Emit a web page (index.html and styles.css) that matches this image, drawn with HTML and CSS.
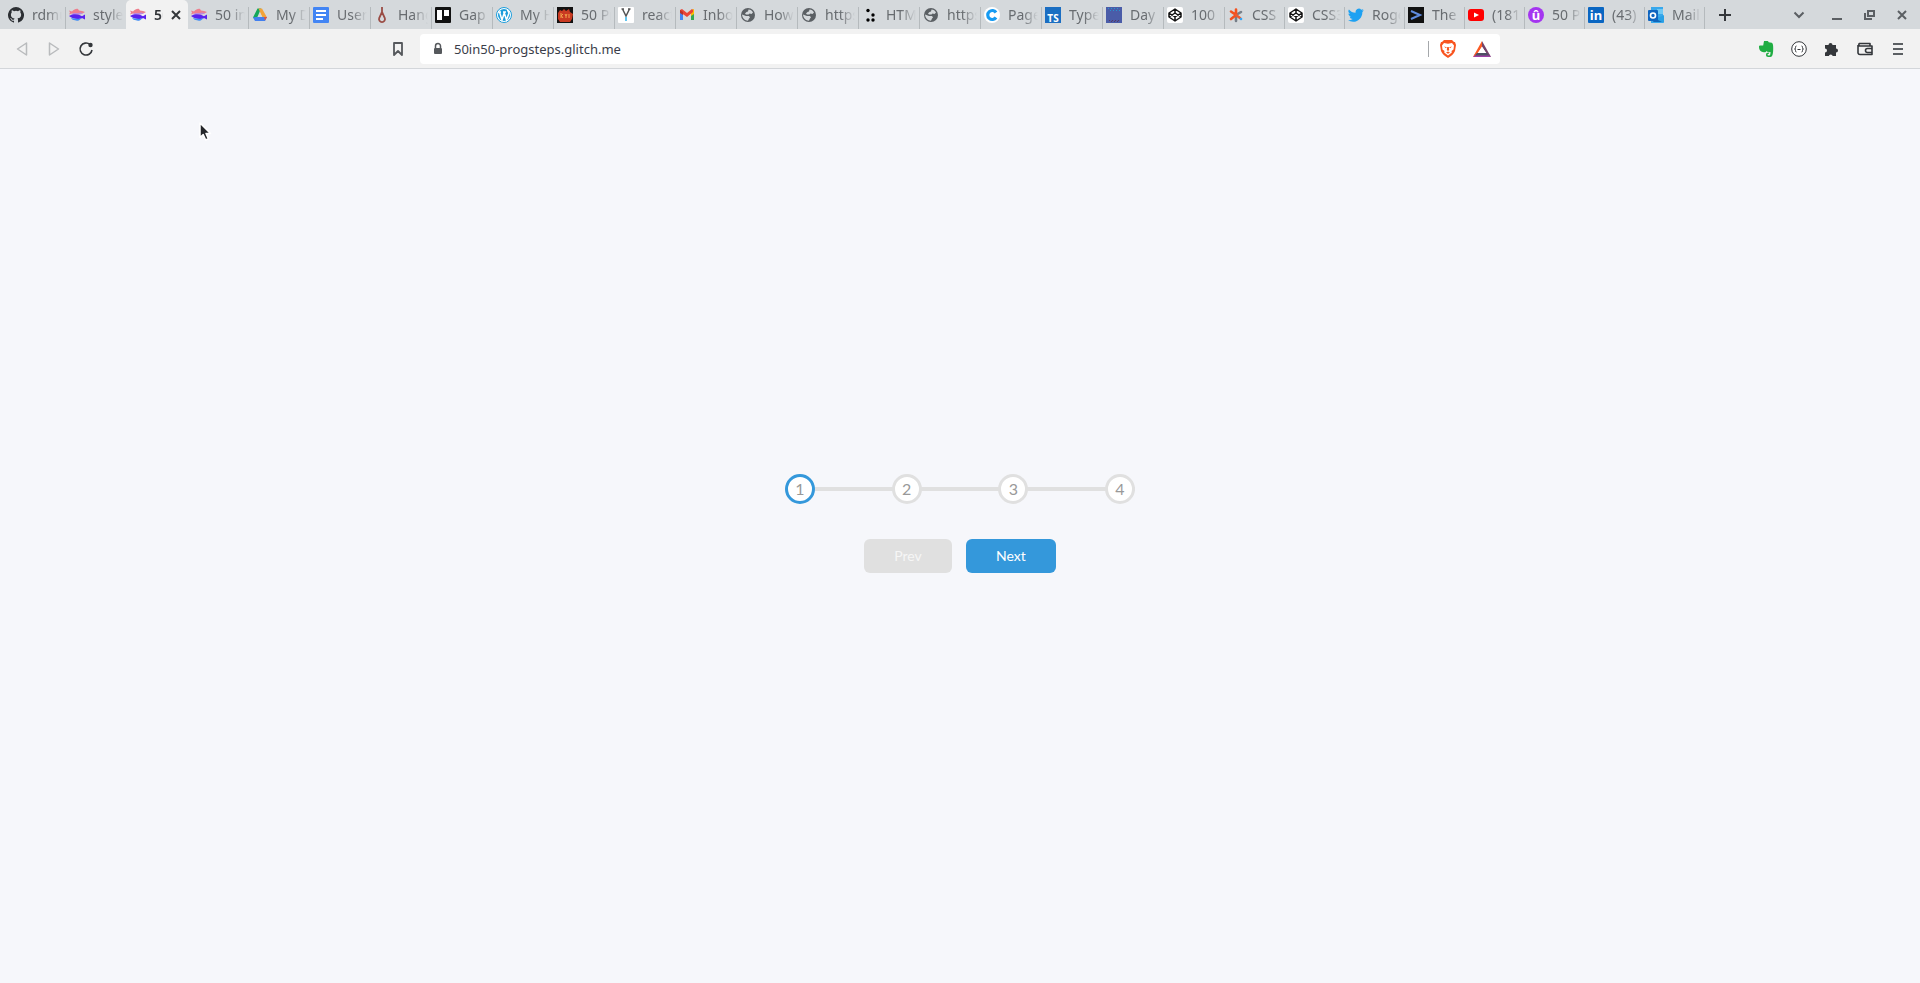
FILE: index.html
```
<!DOCTYPE html>
<html lang="en">
<head>
  <meta charset="UTF-8" />
  <title>Progress Steps</title>
  <meta name="viewport" content="width=device-width, initial-scale=1" />
  <link rel="stylesheet" href="styles.css">
</head>
<body>

  <!-- Shared icons -->
  <svg class="sprite" aria-hidden="true">
    <symbol id="fish" viewBox="0 0 16 16">
      <path fill="#ee7f8e" d="M0 3.500l3 1C5 2.500 7 1.500 9 2l1 1.500c2 0 4 .5 6 1.500-2 1.500-5 2.500-8 2.500-2 0-4-.5-5-1L0 7.500l1-2z"/>
      <path fill="#b98be0" d="M3 6.500c3-1 6 0 8-1l3 .8c-2 1.500-8 2-11 .2z"/>
      <path fill="#5a22ee" d="M0 9c2-1.500 4-1.800 6-1.800 3 0 5 .8 7 2L16 7.500v5l-3-1.500c-3 1.500-9 1.500-13-2z"/>
      <path fill="#3f8df5" d="M2 11c3 1 7 1.200 11 0l-2 1.500c-1 1.500-4 1.500-5 .8-2 0-3-1-4-2.300z"/>
    </symbol>
    <symbol id="globe" viewBox="0 0 16 16">
      <circle cx="8" cy="8" r="7" fill="#5b6064"/>
      <path fill="#d5d9dc" d="M8.500 2.500c2 0 3.500 1 4.500 3l-1.500 1.500-2-.5-1 1H6L5 6.500 6.500 5l1.500-.5zM2 7.500l4 1.500h3l1 1.500-1 1-1 2.300C5 13.500 2.500 11.500 2 7.500z"/>
    </symbol>
    <symbol id="codepen" viewBox="0 0 16 16">
      <rect width="16" height="16" rx="2" fill="#fff"/>
      <path fill="none" stroke="#111" stroke-width="1.500" stroke-linejoin="round" d="M8 2l6 4v4l-6 4-6-4V6zM8 2v4M8 10v4M2 6l6 4 6-4M2 10l6-4 6 4"/>
    </symbol>
  </svg>

  <header class="browser">
    <div class="tab-strip">
      <div class="tabs">
        <div class="tab"><button class="tab-button"><svg class="favicon" viewBox="0 0 16 16"><path fill="#2c2f33" d="M8 0a8 8 0 0 0-2.530 15.590c.4.070.55-.17.55-.38v-1.490c-2.230.49-2.700-.94-2.700-.94-.36-.93-.89-1.170-.89-1.170-.73-.5.060-.49.060-.49.8.060 1.230.83 1.230.83.71 1.220 1.870.87 2.330.66.070-.52.280-.87.510-1.070-1.780-.2-3.640-.89-3.640-3.950 0-.87.310-1.590.82-2.150-.08-.2-.36-1.020.080-2.120 0 0 .67-.21 2.200.82a7.600 7.600 0 0 1 4 0c1.530-1.040 2.200-.82 2.200-.82.44 1.100.16 1.920.080 2.120.51.56.82 1.270.82 2.150 0 3.070-1.870 3.750-3.650 3.950.29.250.54.73.54 1.480v2.190c0 .21.150.46.55.38A8 8 0 0 0 8 0z"/></svg><span>rdmu</span></button></div>
        <div class="tab"><button class="tab-button"><svg class="favicon"><use href="#fish"/></svg><span>style.</span></button></div>
        <div class="tab active"><button class="tab-button"><svg class="favicon"><use href="#fish"/></svg><span>50</span></button><button class="tab-close" aria-label="Close tab"><svg viewBox="0 0 10 10"><path d="M1 1l8 8M9 1L1 9"/></svg></button></div>
        <div class="tab"><button class="tab-button"><svg class="favicon"><use href="#fish"/></svg><span>50 in</span></button></div>
        <div class="tab"><button class="tab-button"><svg class="favicon" viewBox="0 0 16 16"><path fill="#12a85b" d="M5.500 1.500H9L4 13.500l-3-3z"/><path fill="#f2a33a" d="M6.500 1.500H10l5 9h-4.500z"/><path fill="#4280ef" d="M4 10h11l-2 4H3l-2-3.500z"/><path fill="#e8503a" d="M12 10h3l-2 3.500z"/><path fill="#d5d9dc" d="M8 6l2.300 4H5.700z"/></svg><span>My Dr</span></button></div>
        <div class="tab"><button class="tab-button"><svg class="favicon" viewBox="0 0 16 16"><rect width="16" height="16" rx="1" fill="#4285f4"/><path stroke="#fff" stroke-width="2" d="M3 4h10M3 8h10M3 12h7"/></svg><span>User</span></button></div>
        <div class="tab"><button class="tab-button"><svg class="favicon" viewBox="0 0 16 16"><path fill="none" stroke="#9a4c44" stroke-width="1.800" d="M8 0v5M8 5l-2.800 6a3 3 0 1 0 5.600 0zM6.500 7h3"/></svg><span>Hang</span></button></div>
        <div class="tab"><button class="tab-button"><svg class="favicon" viewBox="0 0 16 16"><rect width="16" height="16" rx="1" fill="#111"/><path fill="#fff" d="M2 3h5v10H2zM9 3h5v6H9z"/></svg><span>Gap</span></button></div>
        <div class="tab"><button class="tab-button"><svg class="favicon" viewBox="0 0 16 16"><circle cx="8" cy="8" r="7.500" fill="#fff" stroke="#1c9ddb"/><circle cx="8" cy="8" r="6" fill="#1c9ddb"/><path fill="none" stroke="#fff" stroke-width="1.500" d="M2 5h3M7 5h3M3.500 5L6 13l2.200-7M8 5l2.500 8L13 6l-1.500-3"/></svg><span>My Ho</span></button></div>
        <div class="tab"><button class="tab-button"><svg class="favicon" viewBox="0 0 16 16"><path fill="#111" d="M0 0h16v16H0z"/><path fill="#c93a22" d="M1 6l2-3 2 1 2-2 2 2 3-2 1 3 3 2-1 5-2 3H3l-2-3z"/><path fill="none" stroke="#f3a54d" d="M4 6v5M4 9l2-2M4.500 9L6 11M8 7l1 2 1-2M9 9v2M12 7v4"/></svg><span>50 Pr</span></button></div>
        <div class="tab"><button class="tab-button"><svg class="favicon" viewBox="0 0 16 16"><rect width="16" height="16" rx="1" fill="#fff"/><path fill="none" stroke="#555" stroke-width="1.500" d="M4.500 2L8 9l3.500-7M3.500 2h2.500M10 2h2.500"/><path stroke="#61c4ee" stroke-width="2" d="M8 10v4"/></svg><span>react</span></button></div>
        <div class="tab"><button class="tab-button"><svg class="favicon" viewBox="0 0 16 16"><path fill="#4285f4" d="M1 4h3v9H1z"/><path fill="#34a853" d="M12 4h3v9h-3z"/><path fill="#fbbc04" d="M12 3l3-1v5l-3 2z"/><path fill="#ea4335" d="M1 3l2-1 5 4 5-4 1 1v2l-6 5-7-5z"/><path fill="#b9312b" d="M1 3l3 2v3L1 6z"/></svg><span>Inbox</span></button></div>
        <div class="tab"><button class="tab-button"><svg class="favicon"><use href="#globe"/></svg><span>How</span></button></div>
        <div class="tab"><button class="tab-button"><svg class="favicon"><use href="#globe"/></svg><span>https</span></button></div>
        <div class="tab"><button class="tab-button"><svg class="favicon" viewBox="0 0 16 16"><circle cx="6" cy="3.500" r="1.700"/><circle cx="11" cy="8" r="1.700"/><circle cx="6" cy="13" r="1.700"/><circle cx="11" cy="13" r="1.700"/></svg><span>HTML</span></button></div>
        <div class="tab"><button class="tab-button"><svg class="favicon"><use href="#globe"/></svg><span>https</span></button></div>
        <div class="tab"><button class="tab-button"><svg class="favicon" viewBox="0 0 16 16"><circle cx="8" cy="8" r="8" fill="#fff"/><path fill="none" stroke="#169bf2" stroke-width="3.200" d="M12 5.500a4.500 4.500 0 1 0 0 5"/></svg><span>Page</span></button></div>
        <div class="tab"><button class="tab-button"><span class="favicon letters ts">TS</span><span>Types</span></button></div>
        <div class="tab"><button class="tab-button"><svg class="favicon" viewBox="0 0 16 16"><path fill="#4a5ca8" d="M0 0h16v16H0z"/><path stroke="#2695d0" stroke-dasharray="1 2" d="M2 1.500h12M4 3.500h10"/><path stroke="#583862" stroke-dasharray="1 2" d="M3 13.500h11M5 14.500h9"/></svg><span>Day 3</span></button></div>
        <div class="tab"><button class="tab-button"><svg class="favicon"><use href="#codepen"/></svg><span>100 D</span></button></div>
        <div class="tab"><button class="tab-button"><svg class="favicon" viewBox="0 0 16 16"><g fill="none" stroke-width="2.600" stroke-linecap="round"><path stroke="#777f88" d="M8 8v6M8 8l5-3"/><path stroke="#f4511e" d="M8 8L3 4.500M8 8l-5 4M8 8V2.500"/><path stroke="#ee5b30" d="M8 8l4 3"/><path stroke="#36a5f4" d="M13 12v0"/></g></svg><span>CSS</span></button></div>
        <div class="tab"><button class="tab-button"><svg class="favicon"><use href="#codepen"/></svg><span>CSS3</span></button></div>
        <div class="tab"><button class="tab-button"><svg class="favicon" viewBox="0 0 24 24"><path fill="#1da1f2" d="M23.600 4.900c-.9.400-1.800.7-2.800.8 1-.6 1.800-1.600 2.200-2.700-1 .6-2 1-3.100 1.200a4.900 4.900 0 0 0-8.400 4.500C7.400 8.500 3.800 6.600 1.400 3.600a4.900 4.900 0 0 0 1.500 6.600c-.8 0-1.600-.2-2.200-.6v.1c0 2.400 1.700 4.400 3.900 4.800a5 5 0 0 1-2.200.1 4.900 4.900 0 0 0 4.600 3.400A9.900 9.900 0 0 1 0 20a14 14 0 0 0 7.500 2.200c9.100 0 14.300-7.700 14-14.600.8-.7 1.600-1.600 2.100-2.700z"/></svg><span>Roge</span></button></div>
        <div class="tab"><button class="tab-button"><svg class="favicon" viewBox="0 0 16 16"><path fill="#111" d="M0 0h16v16H0z"/><path fill="none" stroke="#5f8be0" stroke-width="2" d="M3 4l9 4-9 4"/></svg><span>The</span></button></div>
        <div class="tab"><button class="tab-button"><svg class="favicon" viewBox="0 0 16 16"><rect y="2" width="16" height="12" rx="3" fill="#f00"/><path fill="#fff" d="M6 5.500v5L11 8z"/></svg><span>(181)</span></button></div>
        <div class="tab"><button class="tab-button"><span class="favicon letters udemy">û</span><span>50 Pr</span></button></div>
        <div class="tab"><button class="tab-button"><span class="favicon letters linkedin">in</span><span>(43)</span></button></div>
        <div class="tab"><button class="tab-button"><svg class="favicon" viewBox="0 0 16 16"><path fill="#38a8ec" d="M3 0h12v16H3z"/><path fill="#70c8f4" d="M9 2h6v5H9z"/><path fill="#1267b8" d="M8 9l8 6H5z"/><path fill="#2aa0e5" d="M16 8v8l-8-4z"/><rect y="3" width="10" height="11" rx="1" fill="#0f65c0"/><circle cx="5" cy="8.500" r="2.500" fill="none" stroke="#fff" stroke-width="1.600"/></svg><span>Mail -</span></button></div>
      </div>
      <button class="icon-button new-tab" aria-label="New tab"><svg viewBox="0 0 16 16"><path stroke-width="2" d="M8 2v12M2 8h12"/></svg></button>
      <div class="window-buttons">
        <button class="icon-button tab-search" aria-label="Search tabs"><svg viewBox="0 0 16 16"><path stroke-width="2" d="M3.500 5.500L8 10l4.500-4.500"/></svg></button>
        <button class="icon-button" aria-label="Minimize"><svg viewBox="0 0 16 16"><path stroke-width="2" d="M4 12h10"/></svg></button>
        <button class="icon-button" aria-label="Restore"><svg viewBox="0 0 16 16"><path stroke-width="2" d="M7 4h6v5H7zM4 6v6h7"/></svg></button>
        <button class="icon-button" aria-label="Close"><svg viewBox="0 0 16 16"><path stroke-width="2" d="M4 4l8 8M12 4l-8 8"/></svg></button>
      </div>
    </div>

    <div class="toolbar">
      <div class="toolbar-left">
        <button class="icon-button" aria-label="Back" disabled><svg viewBox="0 0 16 16"><path stroke-width="1.500" stroke-linejoin="round" d="M12.500 2v12L3.500 8z"/></svg></button>
        <button class="icon-button" aria-label="Forward" disabled><svg viewBox="0 0 16 16"><path stroke-width="1.500" stroke-linejoin="round" d="M3.500 2v12l9-6z"/></svg></button>
        <button class="icon-button" aria-label="Reload"><svg viewBox="0 0 16 16"><path stroke-width="1.600" d="M12 3.500A6 6 0 1 0 14 9"/><circle cx="12.500" cy="4" r="2.200" fill="#34373b" stroke="none"/></svg></button>
        <button class="icon-button bookmark" aria-label="Bookmark"><svg viewBox="0 0 16 16"><path stroke-width="1.800" stroke-linejoin="round" d="M4 2h8v12l-4-4-4 4z"/></svg></button>
      </div>
      <div class="address-bar">
        <svg class="lock" viewBox="0 0 16 16"><rect x="4" y="7" width="8" height="6" rx="1" fill="#55585c"/><path fill="none" stroke="#55585c" stroke-width="1.500" d="M5.500 7V5a2.500 2.500 0 0 1 5 0v2"/></svg>
        <input type="text" aria-label="Address" value="50in50-progsteps.glitch.me">
        <span class="divider"></span>
        <button class="shield" aria-label="Shields"><svg viewBox="0 0 18 18"><path fill="#f8541f" d="M5 0h8l2 2h1l1 3-1 6c-1 3-4 5-7 7-3-2-6-4-7-7L1 5l1-3h1z"/><path fill="#fff" d="M5 3l4 .8L13 3l2 2.500-.5 4-2 1.500.3 1.500L9 15.500l-3.800-3 .3-1.500-2-1.500-.5-4z"/><path fill="#f8541f" d="M5 6.500l2.800.8-.8 1zM13 6.500l-2.800.8.8 1zM8.200 7h1.600l.4 3L9 11l-1.200-1zM7 12.500l2-1 2 1-2 1.200z"/></svg></button>
        <button class="shield" aria-label="Rewards"><svg viewBox="0 0 18 18"><path fill="#9e3fa5" d="M0 17l2-3h14l2 3z"/><path fill="#fb5a23" d="M9 1v6l-5 7-4 3z"/><path fill="#75436a" d="M9 1l9 16-4-3-5-7z"/><path fill="#4d4f63" d="M4 13h10l2 2.500H2z"/><path fill="#fff" d="M9 6.500l4 6.500H5z"/></svg></button>
      </div>
      <div class="toolbar-right">
        <button class="icon-button" aria-label="Evernote"><svg viewBox="0 0 16 16"><path fill="#20ad43" stroke="none" d="M6 0h3c.9 0 1.400.5 1.700 1.200l3 .5c1 .3 1.500 1.800 1.500 5.300 0 4-.2 9-2.900 9h-2C8.700 16 8 15 8 13.700c0-1.400 1-2.200 2.800-2.200v1.400c-1 0-1.300.3-1.300.8s.4.800 1 .8h.8c1 0 1.200-1.600 1.200-3.500-1.500.3-3 .2-3.800-1-.6 1-1.500 1.300-2.900 1.200C3 11 1 9.500 1 5.500c0-.8.400-1.100 1-1.100h3.200z"/><path stroke="#f2f2f2" stroke-width=".8" d="M1.500 4L5.500.3"/></svg></button>
        <button class="icon-button" aria-label="JSON viewer"><svg viewBox="0 0 16 16"><circle cx="8" cy="8" r="7.300" fill="#fff"/><path d="M5.500 5c-1 0-1 .5-1 1.500S4.500 8 3.500 8c1 0 1 .5 1 1.500s0 1.500 1 1.500M10.500 5c1 0 1 .5 1 1.500s0 1.500 1 1.500c-1 0-1 .5-1 1.500s0 1.500-1 1.500M6.500 8.500h3"/></svg></button>
        <button class="icon-button" aria-label="Extensions"><svg viewBox="0 0 16 16"><path fill="#34373b" stroke="none" d="M1 4h3.500a2 2 0 1 1 4 0H12v3.500a2 2 0 1 1 0 4V15H8.700a2 2 0 0 0-3.900 0H1v-3.500a2 2 0 0 0 0-4z"/></svg></button>
        <button class="icon-button" aria-label="Wallet"><svg viewBox="0 0 16 16"><path stroke-width="1.600" stroke-linejoin="round" d="M13 5V2.500H2.500a1.500 1.500 0 0 0 0 2.500H15v8.500H3A2 2 0 0 1 1 12V4M15 7.500h-4.500a2 2 0 0 0 0 4H15"/></svg></button>
        <button class="icon-button menu" aria-label="Menu"><svg viewBox="0 0 16 16"><path stroke-width="2" d="M3 3h10M3 8h10M3 13h10"/></svg></button>
      </div>
    </div>
  </header>

  <main class="page">
    <div class="container">
      <div class="progress-container">
        <div class="circle active">1</div>
        <div class="circle">2</div>
        <div class="circle">3</div>
        <div class="circle">4</div>
      </div>
      <button class="btn" id="prev" disabled>Prev</button>
      <button class="btn" id="next">Next</button>
    </div>
  </main>

  <svg class="cursor" viewBox="0 0 14 20" aria-hidden="true"><path fill="#24262a" stroke="#fff" stroke-width="1.500" stroke-linejoin="round" d="M1 1v14.500l3.200-3 2.500 5.500 2.600-1.200L7 11.500h4.500z"/></svg>

</body>
</html>
```
FILE: styles.css
```
/* Reset and base */
* {
  box-sizing: border-box;
  margin: 0;
  padding: 0;
}
body {
  min-height: 100vh;
  display: flex;
  flex-direction: column;
  background: #f6f7fb;
  font-family: 'Noto Sans', sans-serif;
  overflow: hidden;
}
button {
  border: none;
  background: none;
  font-family: inherit;
  cursor: pointer;
}
.sprite {
  display: none;
}

/* Tab strip */
.tab-strip {
  display: flex;
  align-items: center;
  height: 29px;
  padding: 0 10px 0 5px;
  background: #d5d9dc;
}
.tabs {
  display: flex;
  align-items: flex-end;
  align-self: stretch;
}
.tab {
  display: flex;
  align-items: flex-start;
  width: 61px;
  height: 22px;
  padding-left: 3px;
  border-right: 1px solid #b5babd;
}
.tab:nth-child(n+21) {
  width: 60px;
}
.tab:nth-child(2) {
  border-right-color: transparent;
}
.tab.active {
  width: 62px;
  height: 29px;
  margin-left: -1px;
  padding: 7px 0 0 4px;
  border: none;
  border-radius: 5px 5px 0 0;
  background: #f2f2f2;
}
.tab-button {
  display: flex;
  align-items: center;
  flex: 1;
  min-width: 0;
  height: 16px;
  gap: 8px;
  color: #686c70;
  font-size: 14px;
  line-height: 22px;
  text-align: left;
}
.tab-button span:last-child {
  flex: 1;
  min-width: 0;
  margin-right: 3px;
  overflow: hidden;
  white-space: nowrap;
  mask-image: linear-gradient(to right, #000 50%, transparent);
}
.tab.active .tab-button {
  color: #2c2f33;
  font-weight: 600;
}
.tab.active .tab-button span:last-child {
  margin: 0;
  mask-image: linear-gradient(to right, #000 70%, transparent);
}
.favicon {
  flex: none;
  width: 16px;
  height: 16px;
}
.letters {
  color: #fff;
  font-weight: 700;
  line-height: 16px;
  text-align: center;
}
.ts {
  padding-top: 4px;
  background: #1b6ec2;
  font-size: 10px;
  line-height: 14px;
}
.udemy {
  border-radius: 50%;
  background: #a435f0;
  font-size: 13px;
}
.linkedin {
  border-radius: 1px;
  background: #0a66c2;
  font-size: 13px;
}
.tab-close {
  width: 10px;
  height: 16px;
  margin: 0 7px 0 8px;
}
.tab-close svg {
  display: block;
  width: 10px;
  height: 10px;
  fill: none;
  stroke: #34373b;
  stroke-width: 2;
}

/* Icon buttons */
.icon-button {
  width: 16px;
  height: 16px;
}
.icon-button svg {
  display: block;
  width: 16px;
  height: 16px;
  fill: none;
  stroke: #34373b;
}
.icon-button:disabled svg {
  stroke: #b9bbbd;
}
.new-tab {
  margin-left: 12px;
}
.window-buttons {
  display: flex;
  gap: 17px;
  margin-left: auto;
}
.window-buttons svg,
.menu svg {
  stroke: #5b5f63;
}
.tab-search {
  margin-right: 4px;
}

/* Toolbar */
.toolbar {
  display: grid;
  grid-template-columns: 420px 1fr 420px;
  align-items: center;
  height: 40px;
  border-bottom: 1px solid #d3d6da;
  background: #f2f2f2;
}
.toolbar-left {
  display: flex;
  gap: 16px;
  padding: 0 14px;
}
.bookmark {
  margin-left: auto;
}
.bookmark svg {
  stroke: #55585c;
}
.address-bar {
  display: flex;
  align-items: center;
  height: 30px;
  padding: 0 9px 0 10px;
  border-radius: 4px;
  background: #fff;
}
.lock {
  width: 16px;
  height: 16px;
}
.address-bar input {
  flex: 1;
  margin-left: 8px;
  border: none;
  outline: none;
  color: #3a3d49;
  font-family: inherit;
  font-size: 13px;
}
.divider {
  width: 1px;
  height: 16px;
  background: #a5a8ab;
}
.shield {
  width: 18px;
  height: 18px;
  margin-left: 10px;
}
.shield + .shield {
  margin-left: 16px;
}
.shield svg {
  display: block;
  width: 18px;
  height: 18px;
}
.toolbar-right {
  display: flex;
  justify-content: flex-end;
  gap: 17px;
  padding-right: 14px;
}

/* Progress steps */
.page {
  flex: 1;
  display: flex;
  align-items: center;
  justify-content: center;
}
.container {
  text-align: center;
}
.progress-container {
  position: relative;
  display: flex;
  justify-content: space-between;
  width: 350px;
  max-width: 100%;
  margin-bottom: 30px;
}
.progress-container::before {
  content: '';
  position: absolute;
  top: 50%;
  left: 0;
  width: 100%;
  height: 4px;
  background: #e0e0e0;
  transform: translateY(-50%);
}
.circle {
  position: relative;
  width: 30px;
  height: 30px;
  border: 3px solid #e0e0e0;
  border-radius: 50%;
  background: #fff;
  color: #999;
  font-family: 'Lato', sans-serif;
  font-size: 16px;
  line-height: 23px;
}
.circle.active {
  border-color: #3498db;
}
.btn {
  margin: 5px;
  padding: 8px 30px;
  border-radius: 6px;
  background: #3498db;
  color: #fff;
  font-family: 'Lato', sans-serif;
  font-size: 14px;
  line-height: 18px;
}
.btn:disabled {
  background: #e0e0e0;
  color: #f6f6f6;
  cursor: not-allowed;
}

/* Mouse pointer */
.cursor {
  position: absolute;
  top: 122px;
  left: 199px;
  width: 14px;
  height: 20px;
}
```
